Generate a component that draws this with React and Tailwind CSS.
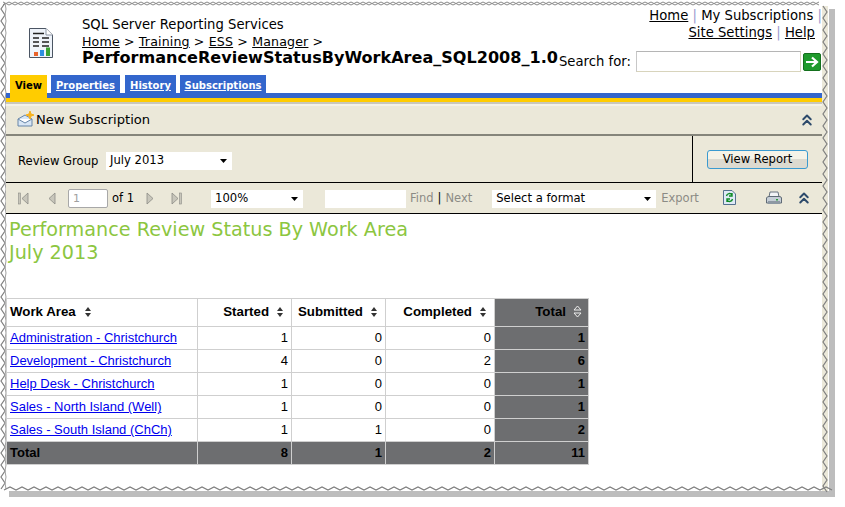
import { ChevronsUp } from "lucide-react";

const rows = [
  ["Administration - Christchurch", 1, 0, 0, 1],
  ["Development - Christchurch", 4, 0, 2, 6],
  ["Help Desk - Christchurch", 1, 0, 0, 1],
  ["Sales - North Island (Well)", 1, 0, 0, 1],
  ["Sales - South Island (ChCh)", 1, 1, 0, 2],
];

function zig(x0, y0, n, dx, dy, amp, horiz) {
  let d = `M${x0} ${y0}`;
  for (let i = 1; i <= n; i++) {
    const off = i % 2 ? amp : 0;
    if (horiz) d += ` L${x0 + i * dx} ${y0 - off}`;
    else d += ` L${x0 + off} ${y0 + i * dy}`;
  }
  return d;
}

function Frame() {
  return (
    <svg className="absolute left-0 top-0 pointer-events-none" width="845" height="507">
      <path d="M829 9 H835 V497 H9 V491 H829 Z" fill="#bdbdbd" />
      <rect x="822" y="6" width="6" height="485" fill="#ebe8d9" />
      <path d={zig(3, 5, 136, 6, 0, 3, true) } fill="none" stroke="#8a8a8a" strokeWidth="1" />
      <path d={zig(3, 2, 136, 6, 0, -3, true)} fill="none" stroke="#8a8a8a" strokeWidth="1" />
      <path d={zig(5, 3, 81, 0, 6, -4, false)} fill="none" stroke="#808080" strokeWidth="1.2" />
      <path d={zig(5, 3, 81, 0, 6, 1, false)} fill="none" stroke="#a0a0a0" strokeWidth="1" />
      <path d={zig(823, 6, 81, 0, 6, 4, false)} fill="none" stroke="#808080" strokeWidth="1.2" />
      <path d={zig(4, 490, 138, 6, 0, 3, true)} fill="none" stroke="#808080" strokeWidth="1.3" />
    </svg>
  );
}

function ReportIcon() {
  return (
    <svg width="26" height="32" viewBox="0 0 26 32">
      <path d="M1.5 1.5 H18 L24.5 8 V30.5 H1.5 Z" fill="#eef3fa" stroke="#4b5563" />
      <path d="M18 1.5 V8 H24.5" fill="#fff" stroke="#8b95a5" />
      <path d="M5 6.5 H16 M5 11 H11 M14 11 H21 M5 15 H11 M14 15 H21 M5 19 H11 M14 19 H21" stroke="#222" strokeWidth="1.6" />
      <rect x="6" y="25" width="4" height="4" fill="#e8622a" />
      <rect x="12" y="23" width="4" height="6" fill="#2c8fe0" />
      <rect x="18" y="20.5" width="4" height="8.5" fill="#3aa335" />
    </svg>
  );
}

function SortIcon({ light }) {
  if (light)
    return (
      <svg width="9" height="13" viewBox="0 0 9 13" className="shrink-0">
        <path d="M4.5 1 L8 5 H1 Z M4.5 12 L8 8 H1 Z" fill="#6d6e70" stroke="#eee" strokeWidth="1" />
      </svg>
    );
  return (
    <svg width="8" height="12" viewBox="0 0 8 12" className="shrink-0">
      <path d="M4 1 L7 5 H1 Z M4 11 L7 7 H1 Z" fill="#333" />
    </svg>
  );
}

function Caret() {
  return (
    <svg width="7" height="4" viewBox="0 0 7 4" className="shrink-0">
      <path d="M0 0 H7 L3.5 4 Z" fill="#000" />
    </svg>
  );
}

function Dropdown({ label, className }) {
  return (
    <div className={`h-[18px] bg-white flex items-center justify-between pl-[4px] pr-[5px] text-[11.6px] text-black ${className}`}>
      <span>{label}</span>
      <Caret />
    </div>
  );
}

function PageNav({ flip, bar }) {
  return (
    <svg width="11" height="13" viewBox="0 0 11 13" className={flip ? "-scale-x-100" : ""}>
      {bar && <rect x="0.5" y="1" width="2" height="11" fill="#c8c6bb" stroke="#8b8b85" strokeWidth="0.6" />}
      <path d={bar ? "M10 1 L4 6.5 L10 12 Z" : "M9 1 L3 6.5 L9 12 Z"} fill="#c8c6bb" stroke="#8b8b85" strokeWidth="0.8" />
    </svg>
  );
}

const th = "border border-[#cfcfcf] font-bold text-black px-[3px] h-[28px] pb-[2px] text-[13.3px]";
const td = "border border-[#cfcfcf] text-black text-right pr-[3px] pl-[3px] h-[23px]";
const dark = "bg-[#6d6e70]";

export default function App() {
  return (
    <div className="relative w-[845px] h-[507px] bg-white overflow-hidden font-['DejaVu_Sans',sans-serif]">
      <Frame />
      <div className="relative ml-[6px] pt-[6px] w-[816px]">
        <div className="h-[69px] flex">
          <div className="w-[76px] pl-[22px] pt-[21px] shrink-0">
            <ReportIcon />
          </div>
          <div className="w-[477px] shrink-0 pt-[11px] text-[13.2px] leading-[16px] text-black">
            <div>SQL Server Reporting Services</div>
            <div className="mt-[1px] whitespace-nowrap text-[12.6px] tracking-[0.15px]">
              <span className="underline">Home</span> &gt; <span className="underline">Training</span> &gt;{" "}
              <span className="underline">ESS</span> &gt; <span className="underline">Manager</span> &gt;
            </div>
            <div className="font-bold text-[16.07px] leading-[16px] whitespace-nowrap">
              PerformanceReviewStatusByWorkArea_SQL2008_1.0
            </div>
          </div>
          <div className="flex-1 flex flex-col items-end text-[13.2px] leading-[16px] text-black">
            <div className="mt-[2px] whitespace-nowrap">
              <span className="underline">Home</span> <span className="text-[#9a9ad0]">|</span> My Subscriptions{" "}
              <span className="text-[#9a9ad0]">|</span>
            </div>
            <div className="mt-[1px] whitespace-nowrap pr-[7px]">
              <span className="underline">Site Settings</span> <span className="text-[#9a9ad0]">|</span>{" "}
              <span className="underline">Help</span>
            </div>
            <div className="mt-[10px] w-full flex items-center">
              <span className="whitespace-nowrap w-[74px] shrink-0 mt-[1px]">Search for:</span>
              <input className="ml-[3px] w-[165px] h-[21px] shrink-0 bg-white border border-[#d8d4bc] border-t-[#b5b5b5] border-l-[#c8c8c8]" />
              <div className="ml-[2px] w-[18px] h-[18px] shrink-0 rounded-[2px] bg-[#1f9a2c] border border-[#14701d] flex items-center justify-center">
                <svg width="14" height="12" viewBox="0 0 14 12">
                  <path d="M1 6 H11 M7 1.5 L12 6 L7 10.5" fill="none" stroke="#fff" strokeWidth="2.2" />
                </svg>
              </div>
            </div>
          </div>
        </div>

        <div className="h-[18px] flex items-start pl-[4px] gap-[4px] text-[10px] font-bold leading-none">
          <div className="w-[37px] h-[23px] z-10 relative bg-[#ffcc00] text-black text-center pt-[6px]">View</div>
          <div className="w-[69px] h-[18px] bg-[#3366cc] text-white underline text-center pt-[6px]">Properties</div>
          <div className="w-[51px] h-[18px] ml-[1px] bg-[#3366cc] text-white underline text-center pt-[6px]">History</div>
          <div className="w-[86px] h-[18px] bg-[#3366cc] text-white underline text-center pt-[6px]">Subscriptions</div>
        </div>
        <div className="h-[5px] bg-[#3366cc]" />
        <div className="h-[4px] bg-[#ffcc00]" />
        <div className="h-[4px] bg-[#f4f2e8] border-t-2 border-[#c9c7bc]" />

        <div className="h-[28px] bg-[#ebe8d9] flex items-center pl-[11px] pr-[6px]">
          <svg width="18" height="16" viewBox="0 0 18 16" className="shrink-0 -mt-[2px]">
            <path d="M1 8 L8 4 L15 8 V15 H1 Z" fill="#d8e6f5" stroke="#6685a8" />
            <path d="M1 8 L8 12 L15 8" fill="#fff" stroke="#6685a8" />
            <path d="M13 0 L14 3 L17 4 L14 5 L13 8 L12 5 L9 4 L12 3 Z" fill="#f7b21c" stroke="#f7b21c" />
          </svg>
          <span className="ml-[1px] text-[13.1px] text-black">New Subscription</span>
          <ChevronsUp className="ml-auto -mt-[1px] text-[#2d4a6b]" size={18} strokeWidth={2.6} />
        </div>
        <div className="h-[2px] bg-[#85857b]" />

        <div className="h-[46px] bg-[#ebe8d9] flex">
          <div className="flex-1 flex items-center pl-[12px] pt-[5px] text-[11.6px] text-black">
            <span className="w-[80px] shrink-0 whitespace-nowrap">Review Group</span>
            <Dropdown label="July 2013" className="ml-[8px] w-[126px] -mt-[2px]" />
          </div>
          <div className="w-[130px] border-l border-black flex justify-center pt-[14px]">
            <div className="w-[101px] h-[19px] rounded-[3px] border-[1.5px] border-[#3a9ad0] bg-[linear-gradient(#f5f3e8_50%,#dcdad0_50%)] text-[11.6px] text-black flex items-center justify-center">
              View Report
            </div>
          </div>
        </div>

        <div className="h-[32px] pt-[1px] bg-[#ebe8d9] border-y border-black flex items-center text-[11.5px] text-[#8b8b85]">
          <div className="ml-[12px]"><PageNav bar /></div>
          <div className="ml-[17px]"><PageNav /></div>
          <input readOnly value="1" className="ml-[11px] w-[40px] h-[19px] shrink-0 bg-white border border-[#a8a8a8] rounded-[2px] pl-[4px] text-[11px] text-[#a0a0a0]" />
          <span className="ml-[4px] w-[21px] text-black whitespace-nowrap">of 1</span>
          <div className="ml-[12px]"><PageNav flip /></div>
          <div className="ml-[15px]"><PageNav flip bar /></div>
          <Dropdown label="100%" className="ml-[29px] w-[92px] shrink-0" />
          <div className="ml-[22px] w-[81px] h-[18px] shrink-0 bg-white" />
          <span className="ml-[4px]">Find</span>
          <span className="mx-[4px] text-black">|</span>
          <span>Next</span>
          <Dropdown label="Select a format" className="ml-[20px] w-[164px] shrink-0" />
          <span className="ml-[5px]">Export</span>
          <svg width="13" height="15" viewBox="0 0 13 15" className="ml-[24px] -mt-[2px] shrink-0">
            <path d="M0.5 0.5 H9 L12.5 4 V14.5 H0.5 Z" fill="#dfeaf6" stroke="#55708f" />
            <path d="M3.5 6 A3 3 0 0 1 9 5 M9 3 V6 H6 M9.5 9 A3 3 0 0 1 4 10 M4 12 V9 H7" fill="none" stroke="#0d8a24" strokeWidth="1.4" />
          </svg>
          <svg width="16" height="14" viewBox="0 0 16 14" className="ml-[30px] -mt-[2px] shrink-0">
            <path d="M4 1 H12 L13 6 H3 Z" fill="#f2f4f6" stroke="#68737f" />
            <path d="M0.5 7 Q1 5.5 3 5.5 H13 Q15.5 5.5 15.5 7 V12 H0.5 Z" fill="#c6ced6" stroke="#5f6a75" />
            <rect x="2" y="10" width="12" height="3" fill="#8d98a3" />
            <rect x="10" y="8" width="2" height="1.5" fill="#2c9c3d" />
          </svg>
          <ChevronsUp className="ml-[13px] -mt-[1px] text-[#2d4a6b]" size={18} strokeWidth={2.6} />
        </div>

        <div className="pl-[3px] pt-[4px] text-[19.2px] leading-[23px] text-[#8cc63f]">
          <div>Performance Review Status By Work Area</div>
          <div>July 2013</div>
        </div>

        <table className="mt-[34px] border-collapse font-['Liberation_Sans',sans-serif] text-[13px] table-fixed w-[582px]">
          <colgroup>
            <col className="w-[191px]" />
            <col className="w-[94px]" />
            <col className="w-[94px]" />
            <col className="w-[109px]" />
            <col className="w-[94px]" />
          </colgroup>
          <thead>
            <tr>
              <th className={`${th} text-left`}>
                <div className="flex items-center gap-[8px]">Work Area <SortIcon /></div>
              </th>
              {["Started", "Submitted", "Completed"].map((h) => (
                <th key={h} className={`${th} text-right`}>
                  <div className="flex items-center justify-end gap-[7px] pr-[4px]">{h} <SortIcon /></div>
                </th>
              ))}
              <th className={`${th} ${dark}`}>
                <div className="flex items-center justify-end gap-[7px] pr-[3px]">Total <SortIcon light /></div>
              </th>
            </tr>
          </thead>
          <tbody>
            {rows.map((r) => (
              <tr key={r[0]}>
                <td className={`${td} text-left!`}>
                  <span className="underline text-[#0000ee]">{r[0]}</span>
                </td>
                <td className={td}>{r[1]}</td>
                <td className={td}>{r[2]}</td>
                <td className={td}>{r[3]}</td>
                <td className={`${td} ${dark} font-bold`}>{r[4]}</td>
              </tr>
            ))}
            <tr className="font-bold">
              <td className={`${td} ${dark} text-left!`}>Total</td>
              <td className={`${td} ${dark}`}>8</td>
              <td className={`${td} ${dark}`}>1</td>
              <td className={`${td} ${dark}`}>2</td>
              <td className={`${td} ${dark}`}>11</td>
            </tr>
          </tbody>
        </table>
      </div>
    </div>
  );
}
